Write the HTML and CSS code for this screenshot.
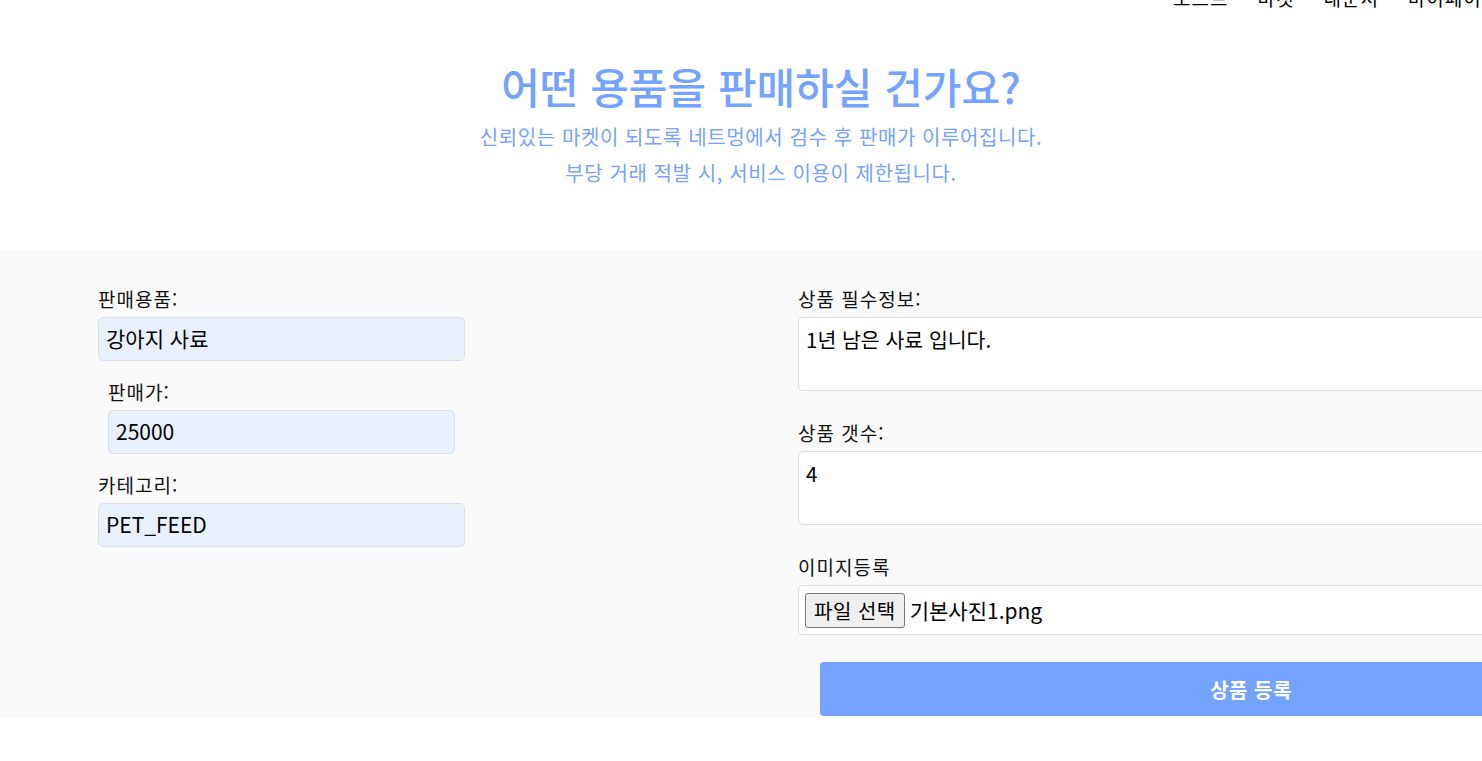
FILE: index.html
```html
<!DOCTYPE html>
<html lang="ko">
<head>
<meta charset="utf-8">
<title>상품 등록</title>
<link rel="stylesheet" href="styles.css">
</head>
<body>
<div class="page">
  <nav class="nav">
    <a class="nav-item">포스트</a>
    <a class="nav-item">마켓</a>
    <a class="nav-item">내문서</a>
    <a class="nav-item">마이페이지</a>
  </nav>
  <header class="intro">
    <h1 class="title">어떤 용품을 판매하실 건가요?</h1>
    <p class="sub">신뢰있는 마켓이 되도록 네트멍에서 검수 후 판매가 이루어집니다.</p>
    <p class="sub">부당 거래 적발 시, 서비스 이용이 제한됩니다.</p>
  </header>
  <section class="form-section">
    <div class="col-left">
      <div class="field">
        <label class="label">판매용품:</label>
        <div class="input">강아지 사료</div>
      </div>
      <div class="field field-indent">
        <label class="label">판매가:</label>
        <div class="input">25000</div>
      </div>
      <div class="field">
        <label class="label">카테고리:</label>
        <div class="input">PET_FEED</div>
      </div>
    </div>
    <div class="col-right">
      <div class="field-r">
        <label class="label">상품 필수정보:</label>
        <div class="textarea">1년 남은 사료 입니다.</div>
      </div>
      <div class="field-r">
        <label class="label">상품 갯수:</label>
        <div class="textarea">4</div>
      </div>
      <div class="field-r field-file">
        <label class="label">이미지등록</label>
        <div class="filebox"><span class="filebtn">파일 선택</span><span class="filename">기본사진1.png</span></div>
      </div>
      <button class="submit">상품 등록</button>
    </div>
  </section>
</div>
</body>
</html>
```
FILE: styles.css
```css
html, body {
  margin: 0;
  padding: 0;
  overflow: hidden;
  background: #ffffff;
}
body {
  font-family: "Noto Sans CJK KR", "Noto Sans", sans-serif;
  color: #111;
}
.page {
  width: 1522px;
}
.nav {
  display: flex;
  gap: 29px;
  padding-left: 1173px;
  margin-top: -14px;
  height: 24px;
  line-height: 24px;
  font-size: 19px;
  letter-spacing: 1px;
}
.nav-item {
  color: #000;
  white-space: nowrap;
}
.intro {
  text-align: center;
  padding-top: 50px;
  height: 240px;
  box-sizing: border-box;
  color: #74a2ff;
}
.title {
  margin: 0;
  font-size: 42px;
  font-weight: 500;
  line-height: 52px;
}
.sub {
  margin: 0;
  font-size: 20px;
  letter-spacing: 0.6px;
  line-height: 36px;
}
.intro .title + .sub {
  margin-top: 7px;
}
.form-section {
  width: 1720px;
  background: #fafafa;
  height: 468px;
  display: flex;
  padding-top: 37px;
  box-sizing: border-box;
}
.col-left {
  flex: 0 0 367px;
  margin-left: 98px;
}
.col-right {
  flex: 0 0 884px;
  margin-left: 333px;
}
.label {
  display: block;
  font-size: 19px;
  letter-spacing: 1px;
  line-height: 24px;
  color: #111;
  margin-bottom: 6px;
}
.field {
  margin-bottom: 19px;
}
.field-indent {
  margin-left: 10px;
  margin-right: 10px;
}
.input {
  height: 44px;
  box-sizing: border-box;
  background: #e8f0fe;
  border: 1px solid #dcdfe4;
  border-radius: 5px;
  padding: 0 7px;
  font-size: 21px;
  line-height: 40px;
  color: #000;
}
.field-r {
  margin-bottom: 30px;
}
.textarea {
  height: 74px;
  box-sizing: border-box;
  background: #fff;
  border: 1px solid #dcdcdc;
  border-radius: 5px;
  padding: 6px 7px;
  font-size: 20.5px;
  line-height: 30px;
  color: #000;
}
.field-file {
  margin-bottom: 27px;
}
.filebox {
  height: 50px;
  box-sizing: border-box;
  background: #fff;
  border: 1px solid #dcdcdc;
  border-radius: 5px;
  padding: 6px 6px;
  display: flex;
  align-items: center;
  gap: 5px;
}
.filebtn {
  display: inline-block;
  height: 35px;
  box-sizing: border-box;
  padding: 0 8px;
  background: #efefef;
  border: 1px solid #767676;
  border-radius: 3px;
  font-size: 20px;
  letter-spacing: 0.5px;
  line-height: 33px;
  color: #000;
}
.filename {
  font-size: 21px;
  color: #000;
}
.submit {
  display: block;
  margin-left: 22px;
  width: 862px;
  height: 54px;
  border: none;
  border-radius: 4px;
  background: #74a2ff;
  color: #fff;
  font-family: inherit;
  font-size: 20px;
  letter-spacing: 0.5px;
  font-weight: 700;
}
```
